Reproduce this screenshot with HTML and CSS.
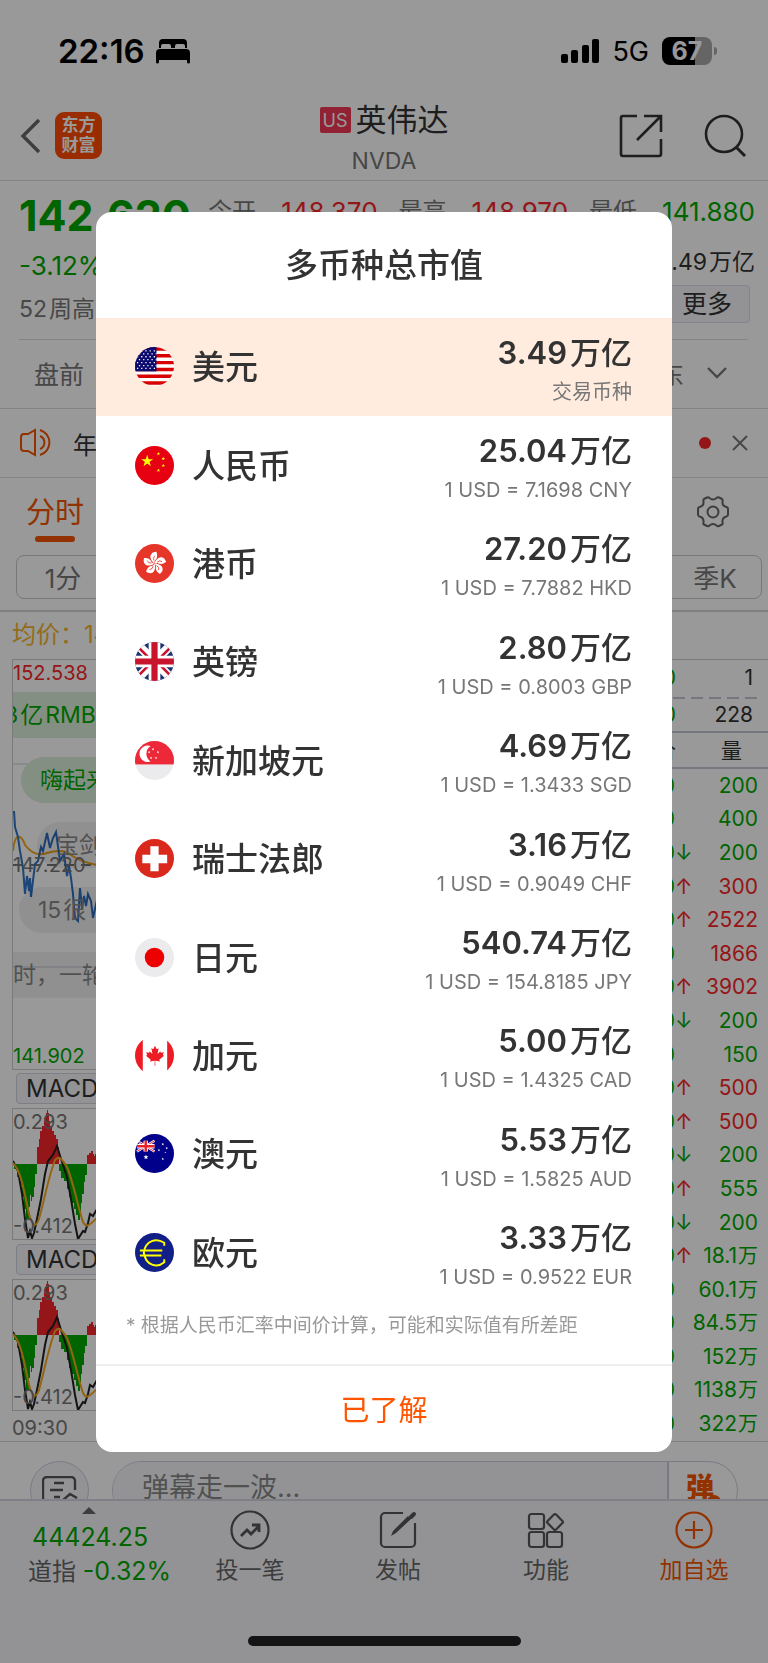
FILE: index.html
```html
<!DOCTYPE html>
<html lang="zh">
<head>
    <meta charset="UTF-8">
    <meta name="viewport" content="width=device-width, initial-scale=1.0">
    <title>英伟达 NVDA</title>
    <link rel="stylesheet" href="styles.css">
</head>
<body>

<!-- 公用图形 -->
<svg class="defs" width="0" height="0" aria-hidden="true">
    <symbol id="star" viewBox="-1 -1 2 2"><polygon points="0,-1 .225,-.309 .951,-.309 .363,.118 .588,.809 0,.382 -.588,.809 -.363,.118 -.951,-.309 -.225,-.309"/></symbol>
    <symbol id="union" viewBox="0 0 40 40" preserveAspectRatio="none">
        <rect width="40" height="40" fill="#1f3473"/>
        <path d="M0 0L40 40M40 0L0 40" stroke="#fff" stroke-width="9"/>
        <path d="M0 2L18 20M22 20L40 2M0 38L18 20M22 20L40 38" stroke="#c8152d" stroke-width="2.6"/>
        <path d="M20 0V40M0 20H40" stroke="#fff" stroke-width="12"/>
        <path d="M20 0V40M0 20H40" stroke="#c8152d" stroke-width="6.4"/>
    </symbol>
    <symbol id="macd" viewBox="0 0 84 132">
        <path fill="#f82628" d="M24 55V38H26V30H27V22H29V17H31V9H33V4H34V1H35V4H36V12H37V17H39V22H41V26H43V30H45V38H46V55Z M74 55V46H76V44H78V42H80V45H81V47H82V45H84V55Z"/>
        <path fill="#00a800" d="M1 55H24V65H22V78H21V88H19V92H18V86H17V98H16V110H13V100H11V88H9V76H7V68H4V60H1Z M46 55H74V66H72V73H71V85H69V94H68V103H67V111H65V106H63V100H61V94H58V88H56V80H54V72H51V69H48V62H46Z"/>
        <path class="macd-dif" d="M0 52L5 62L9 85L12 110L15 129L17 122L19 129L21 124L24 110L28 90L32 65L35 52L40 46L44 37L48 50L54 68L58 90L62 115L65 130L70 122L72 123L75 114L77 105L80 107L84 100"/>
        <path class="macd-dea" d="M0 54C8 62 11 82 15 100C18 115 22 121 26 110C31 92 36 66 42 51C46 46 49 50 54 58C60 72 65 98 70 113C74 121 79 113 84 109"/>
    </symbol>
</svg>

<div class="app">
    <!-- 状态栏 -->
    <div class="status">
        <div class="status-left">
            <span class="clock">22:16</span>
            <svg width="36" height="26" viewBox="0 0 36 26"><path d="M4 10V5a4 4 0 0 1 4-4h20a4 4 0 0 1 4 4v5h-2V8a2 2 0 0 0-2-2h-6a2 2 0 0 0-2 2v2h-4V8a2 2 0 0 0-2-2H8a2 2 0 0 0-2 2v2zM1 24V15a4 4 0 0 1 4-4h26a4 4 0 0 1 4 4v9a1 1 0 0 1-3 0v-2H4v2a1 1 0 0 1-3 0z"/></svg>
        </div>
        <div class="status-right">
            <svg width="40" height="26" viewBox="0 0 40 26"><rect x="1" y="16" width="7" height="9" rx="2"/><rect x="11" y="12" width="7" height="13" rx="2"/><rect x="22" y="7" width="7" height="18" rx="2"/><rect x="32" y="1" width="7" height="24" rx="2"/></svg>
            <span class="net">5G</span>
            <div class="battery"><span>67</span></div>
        </div>
    </div>

    <!-- 顶部导航 -->
    <header class="nav">
        <div class="nav-side">
            <a href="#" class="back" aria-label="返回"><svg width="22" height="36" viewBox="0 0 22 36"><path d="M19 2L3 18L19 34" fill="none" stroke="#666" stroke-width="3.4"/></svg></a>
            <span class="logo">东方<br>财富</span>
        </div>
        <div class="nav-title">
            <h1><span class="us">US</span>英伟达</h1>
            <p>NVDA</p>
        </div>
        <div class="nav-side nav-right">
            <a href="#" aria-label="分享"><svg width="44" height="44" viewBox="0 0 44 44"><path d="M18 2H4a2 2 0 0 0-2 2V40a2 2 0 0 0 2 2H40a2 2 0 0 0 2-2V25M25 2H42V18M42 2L18 26" fill="none" stroke="#333" stroke-width="2.6"/></svg></a>
            <a href="#" aria-label="搜索"><svg width="44" height="44" viewBox="0 0 44 44"><circle cx="21" cy="20" r="18" fill="none" stroke="#333" stroke-width="2.6"/><path d="M33 33L42 42" stroke="#333" stroke-width="3"/></svg></a>
        </div>
    </header>

    <main class="content">
        <!-- 行情 -->
        <section class="quote">
            <div class="quote-left">
                <div class="price">142.620</div>
                <div class="change">-3.12%</div>
                <div class="week">52<span class="unit">周高</span></div>
            </div>
            <div class="quote-right">
                <div class="ohl">
                    <span>今开</span><b class="red">148.370</b>
                    <span>最高</span><b class="red">148.970</b>
                    <span>最低</span><b class="green">141.880</b>
                </div>
                <div class="cap">3.49<span class="unit">万亿</span></div>
                <button class="more">更多</button>
            </div>
        </section>
        <div class="session">
            <span>盘前</span>
            <div class="session-right"><span>东</span><svg width="22" height="14" viewBox="0 0 22 14"><path d="M2 2L11 11L20 2" fill="none" stroke="#777" stroke-width="2.4"/></svg></div>
        </div>
        <div class="news">
            <svg width="34" height="30" viewBox="0 0 34 30" fill="none" stroke="#f25400" stroke-width="2"><path d="M15 2L8 6H4a3 3 0 0 0-3 3V20a3 3 0 0 0 3 3H8L15 27Z"/><path d="M20 8a7 7 0 0 1 0 13M20 2a13 13 0 0 1 0 25"/></svg>
            <span>年</span>
            <i class="dot"></i>
            <button class="close" aria-label="关闭"><svg width="16" height="16" viewBox="0 0 16 16"><path d="M1 1L15 15M15 1L1 15" stroke="#777" stroke-width="2"/></svg></button>
        </div>

        <!-- 周期切换 -->
        <div class="tabs">
            <a href="#" class="tab">分时</a>
            <svg width="34" height="34" viewBox="0 0 34 34" fill="none" stroke="#666" stroke-width="2" stroke-linejoin="round"><path d="M11 2.500Q12.500 2 13.500 3Q17 6 20.500 3Q21.500 2 23 2.500L26 4Q27 5 26.500 6.500Q26 11 30.500 12Q32 12.500 32 14V19.500Q32 21 30.500 21.500Q26 22.500 26.500 27.500Q27 29 26 29.500L23 31Q21.500 31.500 20.500 30.500Q17 27.500 13.500 30.500Q12.500 31.500 11 31L8 29.500Q7 29 7.500 27.500Q8 22.500 3.500 21.500Q2 21 2 19.500V14Q2 12.500 3.500 12Q8 11 7.500 6.500Q7 5 8 4Z"/><circle cx="17" cy="17" r="5.500"/></svg>
        </div>
        <div class="periods">
            <button>1分</button>
            <button>季K</button>
        </div>

        <div class="avg">均价：14</div>
        <section class="market">
            <div class="charts">
                <div class="chart">
                    <svg class="line" width="84" height="410" viewBox="0 0 84 410" fill="none">
                        <path d="M0 104H84M0 307H84" stroke="#dcdfe8" stroke-width="1.500"/>
                        <path d="M0 205H84" stroke="#777" stroke-width="2" stroke-dasharray="10 7"/>
                        <path d="M0 191C2 170 9 176 12 185C18 193 26 196 34 193C44 190 52 190 58 195C66 201 74 203 84 205" stroke="#f5a81c" stroke-width="2"/>
                        <path d="M1 151L2 167L5 177L7 191L10 208L12 234L14 216L16 231L17 218L18 237L22 204L25 201L28 187L30 191L34 173L37 188L40 178L43 172L47 201L51 194L54 216L56 206L58 218L60 234L62 258L65 261L67 228L69 248L71 236L73 246L75 234L78 241L80 258L84 240" stroke="#2f73c8" stroke-width="2"/>
                    </svg>
                    <div class="bullets">
                        <span class="strip strip-green">3<i class="unit">亿</i><i class="unit">RMB</i></span>
                        <span class="pill pill-green">嗨起来</span>
                        <span class="pill pill-in">宝剑</span>
                        <span class="pill">15<i class="unit">很</i></span>
                        <span class="strip">时，一轮</span>
                    </div>
                    <div class="scale"><span class="red">152.538</span><span>147.220</span><span class="green">141.902</span></div>
                </div>
                <button class="index">MACD</button>
                <div class="macd"><svg width="84" height="132"><use href="#macd"/></svg><div class="scale"><span>0.293</span><span>-0.412</span></div></div>
                <button class="index">MACD</button>
                <div class="macd"><svg width="84" height="132"><use href="#macd"/></svg><div class="scale"><span>0.293</span><span>-0.412</span></div></div>
                <div class="time">09:30</div>
            </div>

            <!-- 成交明细 -->
            <div class="tape">
                <div class="ask"><b class="green">0</b><span>1</span></div>
                <div class="bid"><b class="green">0</b><span>228</span></div>
                <div class="tape-head"><b>价</b><span>量</span></div>
                <table>
                    <tr><td>0</td><td></td><td>200</td></tr>
                    <tr><td>0</td><td></td><td>400</td></tr>
                    <tr><td>0</td><td>↓</td><td>200</td></tr>
                    <tr><td>0</td><td class="red">↑</td><td class="red">300</td></tr>
                    <tr><td>0</td><td class="red">↑</td><td class="red">2522</td></tr>
                    <tr><td>0</td><td></td><td class="red">1866</td></tr>
                    <tr><td>0</td><td class="red">↑</td><td class="red">3902</td></tr>
                    <tr><td>0</td><td>↓</td><td>200</td></tr>
                    <tr><td>0</td><td></td><td>150</td></tr>
                    <tr><td>0</td><td class="red">↑</td><td class="red">500</td></tr>
                    <tr><td>0</td><td class="red">↑</td><td class="red">500</td></tr>
                    <tr><td>0</td><td>↓</td><td>200</td></tr>
                    <tr><td>0</td><td class="red">↑</td><td>555</td></tr>
                    <tr><td>0</td><td>↓</td><td>200</td></tr>
                    <tr><td>0</td><td class="red">↑</td><td>18.1<i>万</i></td></tr>
                    <tr><td>0</td><td></td><td>60.1<i>万</i></td></tr>
                    <tr><td>0</td><td></td><td>84.5<i>万</i></td></tr>
                    <tr><td>0</td><td></td><td>152<i>万</i></td></tr>
                    <tr><td>0</td><td></td><td>1138<i>万</i></td></tr>
                    <tr><td>0</td><td></td><td>322<i>万</i></td></tr>
                </table>
            </div>
        </section>

        <!-- 弹幕输入 -->
        <div class="comment">
            <button class="round" aria-label="弹幕列表"><svg width="36" height="32" viewBox="0 0 36 32" fill="none" stroke="#555" stroke-width="2.4"><path d="M18 31H5a4 4 0 0 1-4-4V5a4 4 0 0 1 4-4H29a4 4 0 0 1 4 4V14M12 7H22M8 14H21M12 21H18M20 25L28 18L35 22"/></svg></button>
            <div class="comment-box">
                <input type="text" placeholder="弹幕走一波..." aria-label="弹幕">
                <button class="dan">弹<i></i></button>
            </div>
        </div>
    </main>

    <!-- 底部菜单 -->
    <footer class="bar">
        <nav class="bar-items">
            <a href="#" class="dow">
                <i class="caret"></i>
                <span class="dow-price green">44424.25</span>
                <span>道指 <b class="green">-0.32%</b></span>
            </a>
            <a href="#" class="item"><svg width="40" height="40" viewBox="0 0 40 40" fill="none" stroke="#555" stroke-width="2.200"><circle cx="20" cy="20" r="18.500"/><path d="M11 26L17 20L21 24L29 16M22 15H29V22" stroke-width="2.800"/></svg>投一笔</a>
            <a href="#" class="item"><svg width="40" height="40" viewBox="0 0 40 40" fill="none" stroke="#555" stroke-width="2.200"><path d="M25 3H7a4 4 0 0 0-4 4V33a4 4 0 0 0 4 4H33a4 4 0 0 0 4-4V13"/><path d="M13 26L15 21L30 6L33 9L18 23Z" fill="#555" stroke="none"/><path d="M33 7L36 4" stroke-width="4" stroke-linecap="round"/></svg>发帖</a>
            <a href="#" class="item"><svg width="40" height="40" viewBox="0 0 40 40" fill="none" stroke="#555" stroke-width="2.200"><rect x="3" y="4" width="15" height="15" rx="2.500"/><rect x="3" y="22" width="15" height="15" rx="2.500"/><rect x="21" y="22" width="15" height="15" rx="2.500"/><rect x="23" y="6" width="12" height="12" rx="1.500" transform="rotate(45 29 12)"/></svg>功能</a>
            <a href="#" class="item orange"><svg width="40" height="40" viewBox="0 0 40 40" fill="none" stroke="#f25400" stroke-width="2.200"><circle cx="20" cy="20" r="17.500"/><path d="M11 20H29M20 11V29"/></svg>加自选</a>
        </nav>
        <div class="home"></div>
    </footer>
</div>

<!-- 多币种总市值弹窗 -->
<div class="mask">
    <div class="dialog" role="dialog" aria-labelledby="dialog-title">
        <h2 id="dialog-title">多币种总市值</h2>
        <ul class="list">
            <li class="active">
                <svg class="flag" viewBox="0 0 40 40"><rect width="40" height="40" fill="#fff"/><path d="M0 2H40M0 9H40M0 16H40M0 23H40M0 30H40M0 37H40" stroke="#d80000" stroke-width="3.500"/><rect width="22" height="25" fill="#0a0a6e"/><path d="M2 4H22M2 10H22M2 16H22M2 22H22" stroke="#fff" stroke-width="1.300" stroke-dasharray="1.300 3"/><path d="M4 7H22M4 13H22M4 19H22" stroke="#fff" stroke-width="1.300" stroke-dasharray="1.300 3"/></svg>
                <span class="name">美元</span>
                <div class="value"><strong>3.49<i>万亿</i></strong><small>交易币种</small></div>
            </li>
            <li>
                <svg class="flag" viewBox="0 0 40 40"><rect width="40" height="40" fill="#e60012"/><g fill="#ff0"><use href="#star" x="6" y="9" width="13" height="13"/><use href="#star" x="22" y="6" width="4" height="4"/><use href="#star" x="27" y="11" width="4" height="4"/><use href="#star" x="27" y="18" width="4" height="4"/><use href="#star" x="22" y="23" width="4" height="4"/></g></svg>
                <span class="name">人民币</span>
                <div class="value"><strong>25.04<i>万亿</i></strong><small>1 USD = 7.1698 CNY</small></div>
            </li>
            <li>
                <svg class="flag" viewBox="0 0 40 40"><rect width="40" height="40" fill="#e63529"/><defs><g id="petal"><path d="M20 20C17 18 14 13 17 10C18 8.500 20 8.500 22 8C22.500 10 23.500 12 22 15C21 16.500 19.500 17 20 20Z" fill="#fff"/><path d="M19.500 17Q18 14 20.500 12" fill="none" stroke="#e63529" stroke-width=".8"/></g></defs><use href="#petal"/><use href="#petal" transform="rotate(72 20 20)"/><use href="#petal" transform="rotate(144 20 20)"/><use href="#petal" transform="rotate(216 20 20)"/><use href="#petal" transform="rotate(288 20 20)"/></svg>
                <span class="name">港币</span>
                <div class="value"><strong>27.20<i>万亿</i></strong><small>1 USD = 7.7882 HKD</small></div>
            </li>
            <li>
                <svg class="flag" viewBox="0 0 40 40"><use href="#union" width="40" height="40"/></svg>
                <span class="name">英镑</span>
                <div class="value"><strong>2.80<i>万亿</i></strong><small>1 USD = 0.8003 GBP</small></div>
            </li>
            <li>
                <svg class="flag" viewBox="0 0 40 40"><rect width="40" height="40" fill="#ebebed"/><rect width="40" height="24" fill="#ed2939"/><path d="M16 5a8.500 8.500 0 1 0 0 16a9.500 9.500 0 0 1 0-16z" fill="#fff"/><g fill="#fff"><use href="#star" x="17" y="7" width="3" height="3"/><use href="#star" x="13" y="10" width="3" height="3"/><use href="#star" x="22" y="10" width="3" height="3"/><use href="#star" x="15" y="16" width="3" height="3"/><use href="#star" x="20" y="16" width="3" height="3"/></g></svg>
                <span class="name">新加坡元</span>
                <div class="value"><strong>4.69<i>万亿</i></strong><small>1 USD = 1.3433 SGD</small></div>
            </li>
            <li>
                <svg class="flag" viewBox="0 0 40 40"><rect width="40" height="40" fill="#da291c"/><path d="M20 7.500V33M7.500 20.500H33" stroke="#fff" stroke-width="8.500"/></svg>
                <span class="name">瑞士法郎</span>
                <div class="value"><strong>3.16<i>万亿</i></strong><small>1 USD = 0.9049 CHF</small></div>
            </li>
            <li>
                <svg class="flag" viewBox="0 0 40 40"><rect width="40" height="40" fill="#ebebed"/><circle cx="20" cy="20" r="10" fill="#ed0000"/></svg>
                <span class="name">日元</span>
                <div class="value"><strong>540.74<i>万亿</i></strong><small>1 USD = 154.8185 JPY</small></div>
            </li>
            <li>
                <svg class="flag" viewBox="0 0 40 40"><path d="M0 4H8V36H0ZM33 4H40V36H33Z" fill="#ed1c24"/><path transform="translate(20.500 20) scale(.005)" fill="#ed1c24" d="m-90 2030 45-863a95 95 0 0 0-111-98l-859 151 116-320a65 65 0 0 0-20-73l-941-762 212-99a65 65 0 0 0 34-79l-186-572 542 115a65 65 0 0 0 73-38l105-247 423 454a65 65 0 0 0 111-57l-204-1052 327 189a65 65 0 0 0 91-27l332-652 332 652a65 65 0 0 0 91 27l327-189-204 1052a65 65 0 0 0 111 57l423-454 105 247a65 65 0 0 0 73 38l542-115-186 572a65 65 0 0 0 34 79l212 99-941 762a65 65 0 0 0-20 73l116 320-859-151a95 95 0 0 0-111 98l45 863z"/></svg>
                <span class="name">加元</span>
                <div class="value"><strong>5.00<i>万亿</i></strong><small>1 USD = 1.4325 CAD</small></div>
            </li>
            <li>
                <svg class="flag" viewBox="0 0 40 40"><rect width="40" height="40" fill="#00008b"/><path d="M2 7L20 18M20 7L2 18" stroke="#fff" stroke-width="2.500"/><path d="M2 7L20 18M20 7L2 18" stroke="#e8202c"/><path d="M11 7V18M2 12.500H20" stroke="#fff" stroke-width="4.500"/><path d="M11 7V18M2 12.500H20" stroke="#e8202c" stroke-width="2.500"/><g fill="#fff"><use href="#star" x="8.500" y="21" width="5.500" height="5.500"/><use href="#star" x="27" y="9" width="3" height="3"/><use href="#star" x="23" y="15" width="3" height="3"/><use href="#star" x="31" y="13" width="3" height="3"/><use href="#star" x="30" y="18" width="2" height="2"/><use href="#star" x="27" y="24" width="3" height="3"/></g></svg>
                <span class="name">澳元</span>
                <div class="value"><strong>5.53<i>万亿</i></strong><small>1 USD = 1.5825 AUD</small></div>
            </li>
            <li>
                <svg class="flag" viewBox="0 0 40 40"><rect width="40" height="40" fill="#121f87"/><path d="M30 13V10C22 5 11 7 9 20C11 34 23 36 30 30V27M5 18H28M5 23H27" fill="none" stroke="#ff0" stroke-width="2"/></svg>
                <span class="name">欧元</span>
                <div class="value"><strong>3.33<i>万亿</i></strong><small>1 USD = 0.9522 EUR</small></div>
            </li>
        </ul>
        <p class="note">* 根据人民币汇率中间价计算，可能和实际值有所差距</p>
        <button class="ok">已了解</button>
    </div>
</div>

</body>
</html>
```
FILE: styles.css
```css
* { box-sizing: border-box; }
body { margin: 0; background: #fff; color: #333; font-family: Inter, "Noto Sans CJK SC", sans-serif; font-size: 24px; }
h1, h2, p, ul { margin: 0; padding: 0; font-weight: normal; }
b, i { font-weight: normal; font-style: normal; }
a { color: inherit; text-decoration: none; }
button { font: inherit; color: inherit; padding: 0; border: 0; background: none; cursor: pointer; }
svg { display: block; flex-shrink: 0; }
.defs { position: absolute; }
.red { color: #f82628; }
.green { color: #00a800; }
.orange { color: #f25400; }
.unit { margin-left: 2px; }

.app { display: flex; flex-direction: column; height: 100vh; overflow: hidden; }

/* 状态栏 */
.status { display: flex; justify-content: space-between; height: 96px; padding: 6px 56px 0 58px; flex-shrink: 0; color: #000; }
.status-left, .status-right { display: flex; align-items: center; height: 90px; }
.clock { font-size: 33px; font-weight: 600; margin-right: 10px; }
.net { font-size: 27px; margin: 0 13px 0 12px; }
.battery { position: relative; width: 50px; height: 28px; border-radius: 8px; background: linear-gradient(to right, #000 67%, #a8a8a8 67%); color: #fff; font-size: 25px; font-weight: 700; line-height: 28px; text-align: center; }
.battery::after { content: ""; position: absolute; right: -5px; top: 10px; width: 3px; height: 8px; border-radius: 0 3px 3px 0; background: #a8a8a8; }

/* 顶部导航 */
.nav { display: grid; grid-template-columns: 1fr auto 1fr; height: 85px; flex-shrink: 0; border-bottom: 1px solid #ddd; }
.nav-side { display: flex; align-items: center; height: 79px; padding-left: 20px; }
.nav-right { justify-content: flex-end; gap: 40px; padding-right: 21px; }
.logo { margin-left: 13px; width: 47px; height: 47px; border-radius: 9px; background: #ff4a00; color: #fff; font-size: 17px; font-weight: 700; line-height: 20px; padding-top: 3px; text-align: center; }
.nav-title { text-align: center; }
.nav-title h1 { display: flex; align-items: center; font-size: 31px; line-height: 48px; }
.nav-title p { font-size: 23px; line-height: 34px; color: #777; }
.us { width: 31px; height: 26px; margin-right: 5px; border-radius: 2px; background: #f03a58; color: #fff; font-size: 18px; line-height: 27px; }

.content { flex: 1; min-height: 0; overflow: hidden; }

/* 行情 */
.quote { display: flex; justify-content: space-between; margin: 0 20px 0 19px; padding: 4px 0 6px; border-bottom: 1px solid #ddd; }
.price { font-size: 43px; font-weight: 700; line-height: 60px; color: #00a800; }
.change { font-size: 26px; line-height: 42px; color: #00a800; }
.week { font-size: 23px; line-height: 44px; padding-bottom: 2px; color: #777; }
.quote-right { display: flex; flex-direction: column; align-items: flex-end; margin-right: -7px; }
.ohl { display: flex; gap: 21px; line-height: 54px; color: #777; }
.ohl b { font-size: 26px; margin-left: 4px; }
.cap { font-size: 23px; line-height: 46px; }
.more { width: 86px; height: 38px; margin-right: 5px; border: 1px solid #d8dce4; border-radius: 4px; background: #f5f6fa; font-size: 25px; line-height: 36px; }
.session { display: flex; align-items: center; justify-content: space-between; height: 69px; padding: 0 40px 3px 34px; border-bottom: 1px solid #ddd; font-size: 25px; color: #777; }
.session-right { display: flex; align-items: center; gap: 22px; }
.news { display: flex; align-items: center; height: 69px; padding: 0 20px; border-bottom: 1px solid #ddd; }
.news span { margin-left: 19px; }
.dot { width: 12px; height: 12px; margin-left: auto; border-radius: 50%; background: #f82628; }
.close { margin-left: 21px; }

/* 周期 */
.tabs { display: flex; justify-content: space-between; padding: 12px 38px 0 26px; height: 77px; }
.tab { font-size: 29px; line-height: 46px; color: #f25400; }
.tab::after { content: ""; display: block; width: 40px; height: 6px; margin: 0 auto; border-radius: 3px; background: #f25400; }
.tabs svg { margin-top: 5px; }
.periods { display: flex; justify-content: space-between; height: 44px; margin: 0 6px 11px 16px; border: 1px solid #c8c8cc; border-radius: 8px; }
.periods button { width: 92px; padding-bottom: 2px; font-size: 26px; color: #777; }
.avg { border-top: 2px solid #d4d4d8; height: 49px; padding-left: 12px; line-height: 46px; color: #f5b42c; }

/* 图表和明细 */
.market { display: flex; border-bottom: 1px solid #d4d4d8; }
.charts { flex: 1; padding-left: 12px; }
.chart, .macd { position: relative; border: 1px solid #ccc; border-right: 0; overflow: hidden; }
.chart { height: 411px; margin-bottom: 3px; }
.scale { position: absolute; inset: 0; display: flex; flex-direction: column; justify-content: space-between; font-size: 20px; line-height: 26px; color: #777; }
.bullets { position: absolute; inset: 0; display: flex; flex-direction: column; align-items: flex-start; gap: 19px; padding-top: 32px; font-size: 23px; line-height: 46px; color: #888; }
.strip { width: 100%; background: rgba(0, 0, 0, .06); }
.strip-green { color: #00a800; background: #dcefdc; text-indent: -9px; }
.strip-green i { text-indent: 0; }
.pill { width: 300px; margin-left: 6px; padding-left: 19px; border-radius: 23px; background: rgba(0, 0, 0, .06); }
.pill-green { margin-left: 8px; color: #00a800; background: #dcefdc; }
.pill-in { margin-left: 24px; }
.index { display: block; width: 110px; height: 31px; margin-left: 4px; border: 1px solid #d0d4dc; border-radius: 4px; background: #f5f6fa; line-height: 29px; text-align: left; padding-left: 9px; }
.macd { height: 132px; margin: 4px 0; }
.macd-dif { fill: none; stroke: #222; stroke-width: 2; }
.macd-dea { fill: none; stroke: #f5a81c; stroke-width: 2; }
.time { font-size: 20px; line-height: 26px; color: #777; }
.tape { width: 200px; border-top: 1px solid #ccc; font-size: 21px; }
.ask, .bid, .tape-head { display: flex; justify-content: flex-end; padding-right: 15px; }
.ask { height: 39px; line-height: 35px; background: repeating-linear-gradient(to left, transparent 0 11px, #c4c6d4 11px 23px, transparent 23px 29px, #c4c6d4 29px 41px, transparent 41px 47px, #c4c6d4 47px 59px, transparent 59px 65px, #c4c6d4 65px 77px, transparent 77px 83px, #c4c6d4 83px 95px) bottom / 100% 2px no-repeat; }
.bid { height: 32px; line-height: 32px; }
.tape-head { height: 38px; padding-right: 26px; border: solid #c4c6d4; border-width: 2px 0; line-height: 35px; }
.ask span, .bid span { width: 77px; text-align: right; }
.tape-head span { width: 66px; text-align: right; }
.tape table { width: 100%; height: 672px; padding-right: 10px; border-spacing: 0; line-height: 30px; color: #00a800; }
.tape td { padding: 0; text-align: right; white-space: nowrap; }
.tape td:nth-child(2) { width: 14px; text-align: center; }
.tape td:nth-child(3) { width: 64px; }
.tape td.red { color: #f82628; }
.tape td i { margin-left: 1px; font-size: 20px; }

/* 弹幕 */
.comment { display: flex; gap: 23px; padding: 19px 30px 0; }
.round { width: 59px; height: 59px; border: 1px solid #ccd; border-radius: 50%; background: #f5f6fa; display: flex; justify-content: center; padding-top: 14px; }
.comment-box { display: flex; flex: 1; height: 59px; border: 1px solid #ccd; border-radius: 30px; overflow: hidden; }
.comment-box input { flex: 1; min-width: 0; border: 0; padding: 0 0 7px 29px; background: #f5f6fa; font: inherit; font-size: 27px; }
.comment-box input::placeholder { color: #888; }
.dan { position: relative; width: 70px; border-left: 2px solid #ccd; padding: 0 6px 9px 0; color: #f25400; font-size: 28px; font-weight: 900; }
.dan i { position: absolute; left: 38px; top: 33px; width: 14px; height: 14px; border-radius: 50%; background: #f25400; }

/* 底部 */
.bar { height: 164px; flex-shrink: 0; border-top: 2px solid #d4d6e0; background: #f5f6fa; display: flex; flex-direction: column; justify-content: space-between; }
.bar-items { display: flex; color: #666; font-size: 23px; }
.dow { width: 176px; display: flex; flex-direction: column; line-height: 34px; padding: 6px 0 0 28px; font-size: 24px; white-space: nowrap; }
.dow b { font-size: 25px; }
.dow-price { margin-left: 4px; font-size: 25px; }
.caret { width: 14px; border: 7px solid transparent; border-top: 0; border-bottom-color: #666; margin: 0 0 6px 54px; }
.item { flex: 1; display: flex; flex-direction: column; align-items: center; padding-top: 9px; line-height: 40px; }
.item.orange { color: #f25400; }
.home { width: 273px; height: 10px; margin: 0 auto 17px; border-radius: 5px; background: #222; }

/* 弹窗 */
.mask { position: fixed; inset: 0; display: flex; align-items: center; justify-content: center; background: rgba(0, 0, 0, .4); }
.dialog { width: 75%; border-radius: 16px; background: #fff; overflow: hidden; }
.dialog h2 { font-size: 33px; font-weight: 500; line-height: 106px; text-align: center; }
.list { display: grid; grid-auto-rows: 1fr; min-height: 984px; list-style: none; }
.list li { display: flex; align-items: center; padding: 0 40px 0 39px; }
.list .active { background: #ffecdf; }
.flag { width: 39px; height: 39px; border-radius: 50%; }
.name { margin-left: 18px; font-size: 33px; font-weight: 500; line-height: 46px; padding-top: 1px; }
.value { margin-left: auto; padding-top: 8px; text-align: right; }
.value strong { display: block; font-size: 31px; font-weight: 600; line-height: 42px; }
.value strong i { margin-left: 3px; font-weight: 500; }
.value small { display: block; font-size: 20px; line-height: 36px; color: #777; }
.note { padding-left: 30px; font-size: 19px; line-height: 48px; color: #999; white-space: nowrap; }
.ok { display: block; width: 100%; height: 88px; margin-top: 14px; border-top: 2px solid #eee; padding-bottom: 2px; font-size: 29px; color: #ff5500; }
```
